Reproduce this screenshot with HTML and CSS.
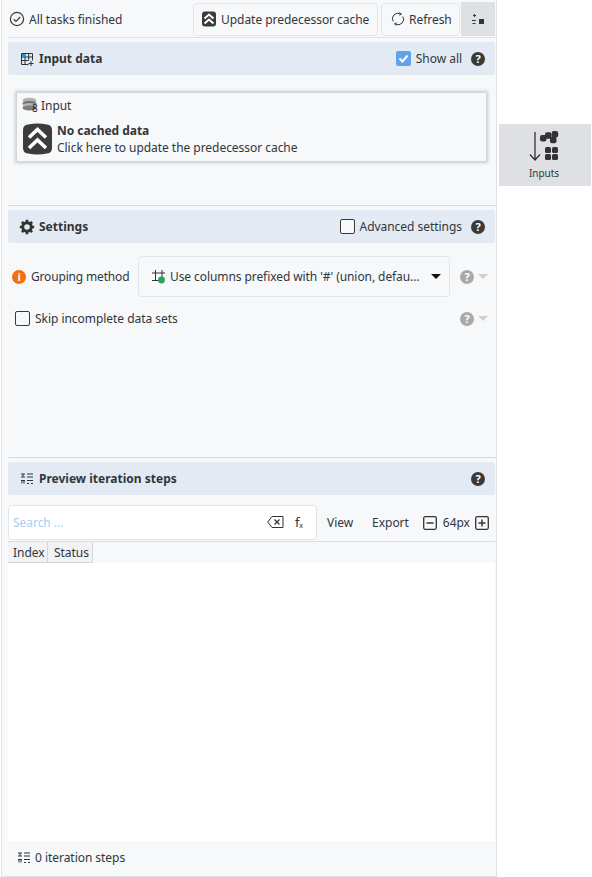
FILE: index.html
```html
<!DOCTYPE html>
<html lang="en">
<head>
    <meta charset="UTF-8">
    <meta name="viewport" content="width=device-width, initial-scale=1.0">
    <title>Iteration</title>
    <link rel="stylesheet" href="styles.css">
</head>
<body>
    <div class="panel">
        <div class="toolbar">
            <div class="status">
                <svg class="icon" width="16" height="16" viewBox="0 0 16 16"><circle cx="8" cy="8" r="6.6" fill="none" stroke="#3a3a3a" stroke-width="1.2"/><path d="M4.8 8.2l2.2 2.2 4.2-4.4" fill="none" stroke="#3a3a3a" stroke-width="1.3"/></svg>
                <span>All tasks finished</span>
            </div>
            <button class="tool-btn update-btn">
                <svg width="16" height="16" viewBox="0 0 16 16"><rect x="1" y="0.5" width="14" height="15" rx="3" fill="#3a3a3a"/><path d="M3.5 7.5L8 3.5l4.5 4M3.5 12.5L8 8.5l4.5 4" fill="none" stroke="#fff" stroke-width="2"/></svg>
                <span>Update predecessor cache</span>
            </button>
            <button class="tool-btn refresh-btn">
                <svg width="14" height="14" viewBox="0 0 14 14"><path d="M2.2 9.5A5.4 5.4 0 0 1 9.5 2M11.8 4.5A5.4 5.4 0 0 1 4.5 12" fill="none" stroke="#3a3a3a" stroke-width="1"/><path d="M8.5 0.5l2 1.7-2.2 1M5.500 13.500l-2-1.700 2.200-1" fill="none" stroke="#3a3a3a" stroke-width="1"/></svg>
                <span>Refresh</span>
            </button>
            <div class="toggle-btn">
                <svg width="14" height="12" viewBox="0 0 14 12"><path d="M2 2.500h3M3.500 1v3M1 7.500h4M1.500 10.500h3" stroke="#333" stroke-width="1" fill="none"/><rect x="8" y="6" width="5" height="5" fill="#333"/></svg>
            </div>
        </div>

        <section class="section section-input">
            <header class="section-head">
                <div class="head-title">
                    <svg width="14" height="14" viewBox="0 0 14 14"><path d="M1.500 1.500h11v7M1.500 1.500v11h7M1.500 5h11M1.500 8.500h7M5 1.500v11M8.700 1.500v7" fill="none" stroke="#333" stroke-width="1"/><path d="M11 9v5M8.500 11.500h5" stroke="#333" stroke-width="1"/><rect x="2" y="2" width="3" height="3" fill="#2f8fe0"/></svg>
                    <span>Input data</span>
                </div>
                <div class="head-tools">
                    <label class="check is-on">
                        <svg width="15" height="15" viewBox="0 0 15 15"><path d="M3.500 7.500l3 3 5-6" fill="none" stroke="#fff" stroke-width="2"/></svg>
                    </label>
                    <span>Show all</span>
                    <span class="help">?</span>
                </div>
            </header>
            <div class="input-card">
                <div class="card-title">
                    <svg width="16" height="16" viewBox="0 0 16 16"><ellipse cx="7.500" cy="3.500" rx="7" ry="2.800" fill="#b0b0b0"/><ellipse cx="7.500" cy="6.500" rx="7" ry="2.500" fill="#6f6f6f"/><ellipse cx="7.500" cy="8.500" rx="7" ry="2.500" fill="#b5b5b5"/><ellipse cx="7.500" cy="11" rx="7" ry="2.500" fill="#7d7d7d"/></svg>
                    <span class="card-count">8</span>
                    <span>Input</span>
                </div>
                <div class="card-body">
                    <svg width="29" height="32" viewBox="0 0 29 32"><path d="M5 1.500Q14.500-.5 24 1.500Q29 2 29 7V25Q29 30 24 30.500Q14.500 32.500 5 30.500Q0 30 0 25V7Q0 2 5 1.500Z" fill="#3c3c3c"/><path d="M6 14.500L14.500 6.500l8.500 8M6 25L14.500 17l8.500 8" fill="none" stroke="#fff" stroke-width="3.600"/></svg>
                    <div class="card-text">
                        <strong>No cached data</strong>
                        <span>Click here to update the predecessor cache</span>
                    </div>
                </div>
            </div>
        </section>

        <section class="section section-settings">
            <header class="section-head">
                <div class="head-title title-settings">
                    <svg width="16" height="16" viewBox="0 0 16 16"><circle cx="8" cy="8" r="4.300" fill="none" stroke="#333" stroke-width="3"/><path d="M8 .8v3M8 12.200v3M.8 8h3M12.200 8h3M2.900 2.900L5 5M11 11l2.100 2.100M2.900 13.100L5 11M11 5l2.100-2.100" stroke="#333" stroke-width="2.600"/></svg>
                    <span>Settings</span>
                </div>
                <div class="head-tools">
                    <label class="check"></label>
                    <span>Advanced settings</span>
                    <span class="help">?</span>
                </div>
            </header>
            <div class="setting-row row-group">
                <span class="warn">i</span>
                <span class="setting-label">Grouping method</span>
                <div class="select">
                    <svg width="14" height="14" viewBox="0 0 14 14"><path d="M3.500 0v11M10 0v7M0 3h13M0 10.500h7" stroke="#333" stroke-width="1" fill="none"/><circle cx="9.500" cy="10" r="3.400" fill="#2aa35c"/></svg>
                    <span class="select-text">Use columns prefixed with '#' (union, defau...</span>
                    <span class="select-arrow"></span>
                </div>
                <span class="help is-muted">?</span>
                <span class="mini-arrow"></span>
            </div>
            <div class="setting-row row-skip">
                <label class="check"></label>
                <span class="skip-label">Skip incomplete data sets</span>
                <span class="help is-muted">?</span>
                <span class="mini-arrow"></span>
            </div>
        </section>

        <section class="section section-preview">
            <header class="section-head">
                <div class="head-title">
                    <svg width="14" height="14" viewBox="0 0 14 14"><path d="M1 2h4M3 2v3M1 5h4M1 8.500h4M2 8.500v3M4 8.500v3M7 2h6M7 5h6M7 8.500h6M7 11.500h2M11 11.500h2" stroke="#333" stroke-width="1" fill="none"/></svg>
                    <span>Preview iteration steps</span>
                </div>
                <div class="head-tools">
                    <span class="help">?</span>
                </div>
            </header>
            <div class="search-row">
                <div class="search-box">
                    <span class="search-hint">Search ...</span>
                    <svg width="17" height="12" viewBox="0 0 17 12"><path d="M5 .5h11v11H5L.7 6z" fill="none" stroke="#333" stroke-width="1"/><path d="M7.500 3.500l5 5M12.500 3.500l-5 5" stroke="#333" stroke-width="1.200"/></svg>
                    <span class="fx">f<sub>x</sub></span>
                </div>
                <span class="link-btn">View</span>
                <span class="link-btn">Export</span>
                <div class="zoom-tools">
                    <svg width="14" height="14" viewBox="0 0 14 14"><rect x=".7" y=".7" width="12.600" height="12.600" rx="1.500" fill="none" stroke="#333" stroke-width="1.300"/><path d="M3.500 7h7" stroke="#333" stroke-width="1.500"/></svg>
                    <span>64px</span>
                    <svg width="14" height="14" viewBox="0 0 14 14"><rect x=".7" y=".7" width="12.600" height="12.600" rx="1.500" fill="none" stroke="#333" stroke-width="1.300"/><path d="M3.500 7h7M7 3.500v7" stroke="#333" stroke-width="1.500"/></svg>
                </div>
            </div>
            <div class="table-head">
                <div class="col col-index">Index</div>
                <div class="col col-status">Status</div>
            </div>
            <div class="table-body"></div>
            <footer class="steps-foot">
                <svg width="14" height="14" viewBox="0 0 14 14"><path d="M1 2h4M3 2v3M1 5h4M1 8.500h4M2 8.500v3M4 8.500v3M7 2h6M7 5h6M7 8.500h6M7 11.500h2M11 11.500h2" stroke="#333" stroke-width="1" fill="none"/></svg>
                <span>0 iteration steps</span>
            </footer>
        </section>
    </div>

    <aside class="side">
        <div class="side-tab">
            <svg width="30" height="30" viewBox="0 0 30 30"><path d="M6 1v28M1 23.500L6 29l5-5.500" fill="none" stroke="#333" stroke-width="1.300"/><g fill="#333"><rect x="11" y="4" width="6.500" height="6.500" rx="2"/><rect x="16" y="1.300" width="6.500" height="6.500" rx="2"/><rect x="21" y="5.700" width="6.500" height="6.500" rx="2"/><rect x="22.700" y="0" width="6.500" height="6.500" rx="2"/><rect x="16" y="16" width="6" height="6" rx="1.500"/><rect x="23" y="16" width="6" height="6" rx="1.500"/><rect x="16" y="23" width="6" height="6" rx="1.500"/><rect x="23" y="23" width="6" height="6" rx="1.500"/></g></svg>
            <span>Inputs</span>
        </div>
    </aside>
</body>
</html>
```

FILE: styles.css
```css
* {
    box-sizing: border-box;
}
body {
    margin: 0;
    height: 877px;
    display: flex;
    align-items: flex-start;
    background-color: #fff;
    font-family: "Noto Sans", sans-serif;
    font-size: 12px;
    letter-spacing: -0.04px;
    color: #31363b;
    overflow: hidden;
}
svg {
    display: block;
    flex: none;
}
.panel {
    width: 496px;
    height: 877px;
    margin-left: 1px;
    padding: 0 0 0 6px;
    display: flex;
    flex-direction: column;
    background-color: #f6f8fa;
    border: 1px solid #dfe1e4;
    border-top: 0;
}
.toolbar {
    height: 38px;
    flex: none;
    display: flex;
    align-items: center;
    border-bottom: 1px solid #dfe1e4;
}
.status {
    flex: 1;
    display: flex;
    align-items: center;
    gap: 4px;
    padding: 1px 0 0 1px;
}
.tool-btn {
    height: 33px;
    display: flex;
    align-items: center;
    gap: 4px;
    margin-top: 1px;
    padding: 0 7px;
    background-color: #f6f8fa;
    border: 1px solid #e3e5e8;
    border-radius: 4px;
    font: inherit;
    letter-spacing: inherit;
    color: inherit;
    white-space: nowrap;
}
.update-btn {
    width: 185px;
    margin-right: 3px;
}
.refresh-btn {
    width: 79px;
    margin-right: 1px;
    padding-left: 9px;
}
.toggle-btn {
    width: 34px;
    height: 34px;
    margin-right: 1px;
    display: flex;
    align-items: center;
    justify-content: center;
    background-color: #dfe0e4;
}
.section {
    flex: none;
    display: flex;
    flex-direction: column;
}
.section-input {
    height: 168px;
    padding-top: 4px;
    border-bottom: 1px solid #d8d9dc;
}
.section-settings {
    height: 252px;
    padding-top: 4px;
    border-bottom: 1px solid #d8d9dc;
}
.section-preview {
    flex: 1;
    padding-top: 4px;
}
.section-head {
    height: 33px;
    flex: none;
    display: flex;
    align-items: center;
    justify-content: space-between;
    padding: 0 10px 0 12px;
    margin-right: 1px;
    background-color: #e4eaf3;
    border-radius: 3px;
}
.head-title {
    display: flex;
    align-items: center;
    gap: 5px;
    font-weight: 700;
    letter-spacing: 0;
}
.title-settings {
    margin-left: -1px;
    gap: 4px;
}
.head-tools {
    display: flex;
    align-items: center;
    gap: 5px;
}
.check {
    width: 15px;
    height: 15px;
    display: block;
    background-color: #f6f8fa;
    border: 1px solid #3a3a3a;
    border-radius: 2px;
}
.check.is-on {
    background-color: #5fa4e8;
    border: 0;
}
.help {
    width: 14px;
    height: 14px;
    margin-left: 4px;
    display: flex;
    align-items: center;
    justify-content: center;
    background-color: #3a3a3a;
    border-radius: 50%;
    color: #fff;
    font-size: 11px;
    font-weight: 700;
}
.help.is-muted {
    background-color: #a9a9a9;
}
.input-card {
    width: 471px;
    height: 70px;
    margin: 17px 0 0 8px;
    padding: 3px 4px 0 5px;
    background-color: #f6f8fa;
    border: 1px solid #d4d5d7;
    box-shadow: 0 0 3px 1px #c9cacc;
}
.card-title {
    position: relative;
    display: flex;
    align-items: center;
    gap: 3px;
    height: 18px;
}
.card-count {
    position: absolute;
    left: 10px;
    top: 6px;
    font-size: 10px;
    line-height: 12px;
    color: #222;
}
.card-body {
    margin-top: 8px;
    display: flex;
    align-items: center;
    gap: 5px;
    padding-left: 1px;
}
.card-text {
    display: flex;
    flex-direction: column;
    line-height: 17px;
}
.setting-row {
    display: flex;
    align-items: center;
    margin-right: 1px;
}
.row-group {
    margin-top: 13px;
}
.warn {
    width: 14px;
    height: 14px;
    margin-left: 4px;
    display: flex;
    align-items: center;
    justify-content: center;
    background-color: #f0700d;
    border-radius: 50%;
    color: #fff;
    font-size: 11px;
    font-weight: 700;
}
.setting-label {
    margin-left: 5px;
    width: 107px;
    letter-spacing: -0.17px;
}
.select {
    width: 312px;
    height: 41px;
    display: flex;
    align-items: center;
    gap: 4px;
    padding: 0 8px 0 13px;
    border: 1px solid #e3e5e8;
    border-radius: 4px;
}
.select-text {
    flex: 1;
    white-space: nowrap;
    letter-spacing: -0.08px;
}
.select-arrow {
    width: 0;
    height: 0;
    border: 5px solid transparent;
    border-top: 5px solid #111;
    border-bottom: 0;
    border-left-width: 5.5px;
    border-right-width: 5.5px;
}
.mini-arrow {
    width: 0;
    height: 0;
    margin-left: 4px;
    border: 5px solid transparent;
    border-top: 5px solid #d0d0d0;
    border-bottom: 0;
}
.setting-row .help {
    margin-left: 10px;
}
.row-skip {
    margin-top: 13px;
}
.row-skip .check {
    margin-left: 7px;
}
.skip-label {
    margin-left: 5px;
    width: 415px;
}
.search-row {
    height: 35px;
    margin-top: 10px;
    margin-right: 1px;
    margin-bottom: 1px;
    flex: none;
    display: flex;
    align-items: center;
}
.search-box {
    width: 309px;
    height: 35px;
    display: flex;
    align-items: center;
    padding: 0 13px 1px 4px;
    background-color: #fff;
    border: 1px solid #e3e5e8;
    border-radius: 4px;
}
.search-hint {
    flex: 1;
    color: #a5cdf5;
}
.fx {
    margin-left: 11px;
    font-size: 13px;
    line-height: 16px;
}
.fx sub {
    font-size: 7px;
    line-height: 0;
    vertical-align: -1px;
}
.link-btn {
    margin-left: 10px;
}
.link-btn + .link-btn {
    margin-left: 19px;
}
.zoom-tools {
    margin-left: 14px;
    display: flex;
    align-items: center;
    gap: 5px;
}
.zoom-tools span {
    margin: 0 0 0 1px;
}
.table-head {
    height: 22px;
    flex: none;
    display: flex;
    margin-right: 1px;
    border-top: 1px solid #dcdde0;
}
.col {
    line-height: 21px;
    height: 21px;
    background-color: #f1f2f4;
    border-right: 1px solid #d4d5d8;
    border-bottom: 1px solid #d4d5d8;
}
.col-index {
    width: 40px;
    padding-left: 5px;
}
.col-status {
    width: 45px;
    padding-left: 6px;
}
.table-body {
    flex: 1;
    margin-right: 1px;
    background-color: #fff;
}
.steps-foot {
    height: 35px;
    flex: none;
    display: flex;
    align-items: center;
    gap: 4px;
    padding: 0 0 2px 9px;
}
.side {
    margin: 124px 0 0 2px;
}
.side-tab {
    width: 92px;
    height: 62px;
    display: flex;
    flex-direction: column;
    align-items: center;
    padding: 7px 2px 0 0;
    gap: 5px;
    background-color: #dfe0e4;
    font-size: 10px;
}
```
